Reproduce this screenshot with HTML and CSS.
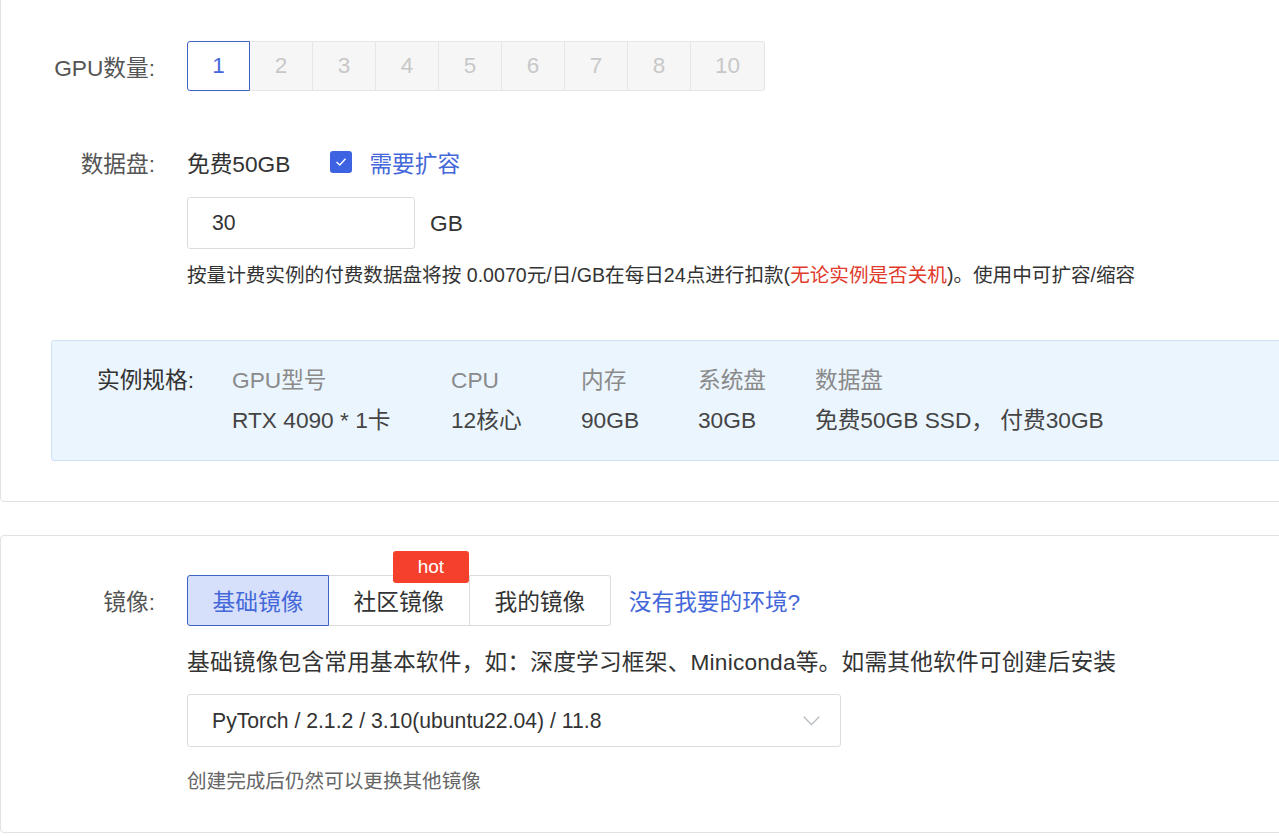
FILE: index.html
```html
<!DOCTYPE html>
<html lang="zh-CN">
<head>
<meta charset="utf-8">
<title>实例配置</title>
<link rel="stylesheet" href="styles.css">
</head>
<body>
<div class="page">
  <section class="card card-top">
    <div class="row row-gpu">
      <div class="label">GPU数量:</div>
      <div class="num-group">
        <span class="num active">1</span>
        <span class="num disabled">2</span>
        <span class="num disabled">3</span>
        <span class="num disabled">4</span>
        <span class="num disabled">5</span>
        <span class="num disabled">6</span>
        <span class="num disabled">7</span>
        <span class="num disabled">8</span>
        <span class="num disabled">10</span>
      </div>
    </div>

    <div class="row row-disk">
      <div class="label">数据盘:</div>
      <div class="disk-line">
        <span class="free">免费50GB</span>
        <span class="checkbox">
          <svg width="12" height="10" viewBox="0 0 12 10"><polyline points="1.5,5 4.8,8 10.5,1.8" fill="none" stroke="#fff" stroke-width="1.4"/></svg>
        </span>
        <span class="link">需要扩容</span>
      </div>
    </div>

    <div class="indent">
      <div class="size-line">
        <div class="input">30</div>
        <span class="unit">GB</span>
      </div>
      <p class="note">按量计费实例的付费数据盘将按 0.0070元/日/GB在每日24点进行扣款(<span class="red">无论实例是否关机</span>)。使用中可扩容/缩容</p>
    </div>

    <div class="spec">
      <div class="spec-label">实例规格:</div>
      <div class="spec-grid">
        <span class="h">GPU型号</span>
        <span class="h">CPU</span>
        <span class="h">内存</span>
        <span class="h">系统盘</span>
        <span class="h">数据盘</span>
        <span class="v">RTX 4090 * 1卡</span>
        <span class="v">12核心</span>
        <span class="v">90GB</span>
        <span class="v">30GB</span>
        <span class="v">免费50GB SSD， 付费30GB</span>
      </div>
    </div>
  </section>

  <section class="card card-image">
    <div class="row row-tabs">
      <div class="label">镜像:</div>
      <div class="tabs">
        <span class="tab active">基础镜像</span>
        <span class="tab">社区镜像<span class="hot">hot</span></span>
        <span class="tab">我的镜像</span>
      </div>
      <span class="link env">没有我要的环境?</span>
    </div>
    <div class="indent">
      <p class="desc">基础镜像包含常用基本软件，如：深度学习框架、Miniconda等。如需其他软件可创建后安装</p>
      <div class="select">
        <span>PyTorch / 2.1.2 / 3.10(ubuntu22.04) / 11.8</span>
        <svg width="17" height="10" viewBox="0 0 17 10"><polyline points="0.8,0.8 8.5,8.6 16.2,0.8" fill="none" stroke="#b4b8bf" stroke-width="1.3"/></svg>
      </div>
      <p class="note muted">创建完成后仍然可以更换其他镜像</p>
    </div>
  </section>
</div>
</body>
</html>
```

FILE: styles.css
```css
* { box-sizing: border-box; }
html, body { margin: 0; padding: 0; background: #fff; }
body {
  font-family: "Liberation Sans", Arial, "Noto Sans CJK SC", sans-serif;
  color: #333;
}
.page {
  width: 1279px;
  height: 837px;
  overflow: hidden;
}
.card {
  background: #fff;
  border: 1px solid #e2e2e2;
  border-radius: 4px;
  margin-right: -20px;
}
.card-top {
  margin-top: -20px;
  padding: 60px 0 40px 0;
}
.card-image {
  margin-top: 33px;
  padding: 39px 0 37px 0;
}
.row {
  display: flex;
  align-items: center;
}
.label {
  width: 186px;
  padding-right: 32px;
  text-align: right;
  font-size: 22.7px;
  color: #555;
  flex-shrink: 0;
}
.num-group {
  display: flex;
}
.num {
  height: 50px;
  padding: 0 24px;
  min-width: 63px;
  display: flex;
  align-items: center;
  justify-content: center;
  font-size: 22.5px;
  border: 1px solid #e6e6e6;
  border-left: none;
}
.num.active {
  border: 1px solid #3e62c2;
  border-radius: 3px 0 0 3px;
  color: #4468d9;
  background: #fff;
}
.num.disabled {
  background: #f6f6f6;
  color: #c8c8c8;
}
.num:last-child { border-radius: 0 3px 3px 0; }

.row-disk {
  margin-top: 53px;
  height: 36px;
}
.disk-line {
  display: flex;
  align-items: center;
  font-size: 22.7px;
}
.free { color: #333; }
.checkbox {
  width: 22px;
  height: 22px;
  margin-left: 40px;
  background: #3d63e2;
  border-radius: 3px;
  display: flex;
  align-items: center;
  justify-content: center;
}
.link { color: #4468d9; font-size: 22.7px; }
.checkbox + .link { margin-left: 17px; }

.indent { padding-left: 186px; }
.size-line {
  display: flex;
  align-items: center;
  margin-top: 17px;
}
.input {
  width: 228px;
  height: 52px;
  border: 1px solid #dcdcdc;
  border-radius: 3px;
  padding-left: 24px;
  display: flex;
  align-items: center;
  font-size: 21.2px;
  color: #333;
}
.unit {
  margin-left: 15px;
  font-size: 22.7px;
  color: #333;
}
.note {
  margin: 12px 0 0 0;
  font-size: 19.6px;
  line-height: 28px;
  color: #333;
  white-space: nowrap;
}
.red { color: #e03a2c; }

.spec {
  margin: 51px 0 0 50px;
  background: #ebf5fe;
  border: 1px solid #cfe2f3;
  border-radius: 3px;
  padding: 19px 0 20px 45px;
  display: flex;
  align-items: flex-start;
}
.spec-label {
  width: 135px;
  font-size: 22.7px;
  line-height: 40px;
  color: #333;
}
.spec-grid {
  display: grid;
  grid-template-columns: 219px 130px 117px 117px auto;
  font-size: 22.7px;
  line-height: 40px;
}
.spec-grid .h { color: #8a8a8a; }
.spec-grid .v { color: #444; }

.tabs { display: flex; }
.tab {
  position: relative;
  height: 51px;
  padding: 0 24.6px;
  display: flex;
  align-items: center;
  font-size: 22.7px;
  color: #333;
  border: 1px solid #dcdcdc;
  border-left: none;
  background: #fff;
}
.tab.active {
  background: #d7e0fb;
  border: 1px solid #3e62c2;
  color: #4468d9;
  border-radius: 3px 0 0 3px;
}
.tab:last-child { border-radius: 0 3px 3px 0; }
.hot {
  position: absolute;
  right: 0;
  top: -25px;
  width: 76px;
  height: 32px;
  background: #f5402c;
  color: #fff;
  border-radius: 3px;
  font-size: 19px;
  display: flex;
  align-items: center;
  justify-content: center;
}
.env { margin-left: 18px; }

.desc {
  margin: 22px 0 0 0;
  font-size: 22.7px;
  letter-spacing: 0.2px;
  line-height: 28px;
  color: #333;
  white-space: nowrap;
}
.select {
  margin-top: 18px;
  width: 654px;
  height: 53px;
  border: 1px solid #dcdcdc;
  border-radius: 3px;
  padding: 0 20px 0 24px;
  display: flex;
  align-items: center;
  justify-content: space-between;
  font-size: 21.2px;
  color: #333;
}
.note.muted {
  margin-top: 20px;
  color: #666;
}
```
